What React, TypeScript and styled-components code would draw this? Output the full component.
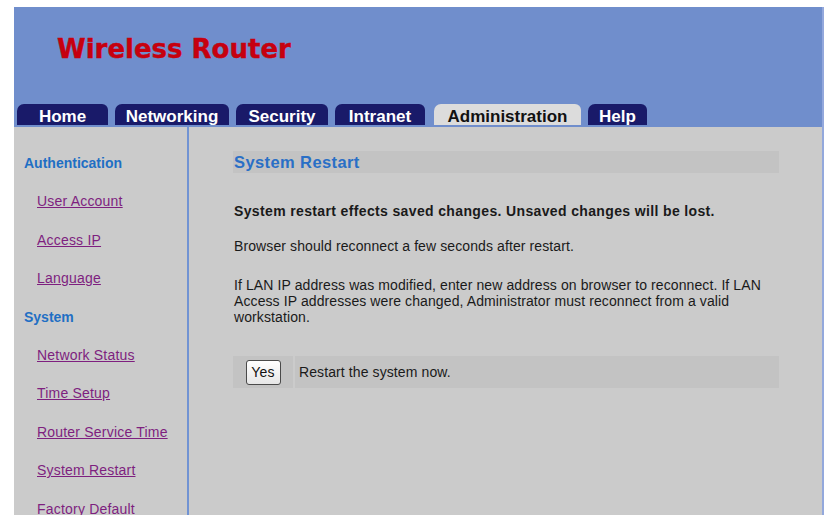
import React from "react";
import styled, { createGlobalStyle } from "styled-components";

const Global = createGlobalStyle`
  html, body { margin: 0; padding: 0; background: #ffffff; }
  body { font-family: "Liberation Sans", Arial, sans-serif; }
`;

const Frame = styled.div`
  margin: 7px 0 0 14px;
  width: 810px;
  height: 508px;
  display: flex;
  flex-direction: column;
  overflow: hidden;
  box-sizing: border-box;
  border-right: 2px solid #93a8dc;
  background: #cbcbcb;
`;

const Header = styled.header`
  flex-shrink: 0;
  height: 120px;
  box-sizing: border-box;
  background: #708ecc;
  display: flex;
  flex-direction: column;
  padding: 27px 0 2px 0;
`;

const Brand = styled.h1`
  margin: 0 0 0 43px;
  font-family: "DejaVu Sans", "Liberation Sans", sans-serif;
  font-weight: bold;
  font-size: 26px;
  line-height: 30px;
  color: #c6000f;
  -webkit-text-stroke: 0.4px #c6000f;
`;

const Tabs = styled.nav`
  margin-top: auto;
  display: flex;
  gap: 7px;
  padding-left: 3px;
  height: 21px;
`;

const Tab = styled.a<{ $w: number; $active?: boolean; $ml?: number }>`
  width: ${(p) => p.$w}px;
  margin-left: ${(p) => p.$ml ?? 0}px;
  height: 21px;
  box-sizing: border-box;
  border-radius: 7px 6px 0 0;
  background: ${(p) => (p.$active ? "#dcdcdc" : "#191a69")};
  color: ${(p) => (p.$active ? "#111" : "#ffffff")};
  font-weight: bold;
  font-size: 17px;
  line-height: 26px;
  text-align: center;
  white-space: nowrap;
  text-decoration: none;
`;

const Body = styled.div`
  flex: 1;
  min-height: 0;
  display: grid;
  grid-template-columns: 175px 1fr;
`;

const Sidebar = styled.aside`
  border-right: 2px solid #7193d3;
  padding: 28px 0 0 10px;
  display: flex;
  flex-direction: column;
  gap: 22.4px;
`;

const SideHeading = styled.div`
  font-weight: bold;
  font-size: 14px;
  line-height: 16px;
  color: #1f6fc4;
`;

const SideLink = styled.a`
  margin-left: 13px;
  font-size: 14px;
  line-height: 16px;
  letter-spacing: 0.2px;
  color: #7e1f7f;
  text-decoration: underline;
  white-space: nowrap;
`;

const Content = styled.main`
  padding: 24px 43px 0 44px;
  display: flex;
  flex-direction: column;
  color: #1a1a1a;
`;

const TitleBar = styled.h2`
  margin: 0;
  height: 22px;
  box-sizing: border-box;
  padding: 1px 0 0 1px;
  background: #c3c3c3;
  color: #2a6fc6;
  font-size: 16.5px;
  letter-spacing: 0.4px;
  line-height: 21px;
  font-weight: bold;
`;

const Para = styled.p<{ $bold?: boolean; $mt: number }>`
  margin: ${(p) => p.$mt}px 0 0 1px;
  font-size: 14px;
  line-height: 16px;
  font-weight: ${(p) => (p.$bold ? "bold" : "normal")};
  letter-spacing: ${(p) => (p.$bold ? "0.36px" : "0.1px")};
`;

const ActionRow = styled.div`
  margin-top: 31px;
  height: 32px;
  display: grid;
  grid-template-columns: 60px 1fr;
  gap: 2px;
`;

const Cell = styled.div<{ $center?: boolean }>`
  background: #c3c3c3;
  display: flex;
  align-items: center;
  justify-content: ${(p) => (p.$center ? "center" : "flex-start")};
  padding-left: ${(p) => (p.$center ? 0 : 4)}px;
  font-size: 14px;
  letter-spacing: 0.1px;
`;

const YesButton = styled.button`
  width: 35px;
  height: 25px;
  padding: 0;
  border: 1px solid #4a4a4a;
  border-radius: 3px;
  background: linear-gradient(#ffffff, #e6e6e6);
  font-family: "Liberation Sans", Arial, sans-serif;
  font-size: 14px;
  letter-spacing: 0.3px;
  color: #111;
`;

const tabs = [
  { label: "Home", w: 91 },
  { label: "Networking", w: 114 },
  { label: "Security", w: 92 },
  { label: "Intranet", w: 90 },
  { label: "Administration", w: 147, active: true, ml: 2 },
  { label: "Help", w: 59 },
];

const side: { text: string; heading?: boolean }[] = [
  { text: "Authentication", heading: true },
  { text: "User Account" },
  { text: "Access IP" },
  { text: "Language" },
  { text: "System", heading: true },
  { text: "Network Status" },
  { text: "Time Setup" },
  { text: "Router Service Time" },
  { text: "System Restart" },
  { text: "Factory Default" },
];

export default function App() {
  return (
    <>
      <Global />
      <Frame>
        <Header>
          <Brand>Wireless Router</Brand>
          <Tabs>
            {tabs.map((t) => (
              <Tab key={t.label} $w={t.w} $active={t.active} $ml={t.ml}>
                {t.label}
              </Tab>
            ))}
          </Tabs>
        </Header>
        <Body>
          <Sidebar>
            {side.map((s) =>
              s.heading ? (
                <SideHeading key={s.text}>{s.text}</SideHeading>
              ) : (
                <SideLink key={s.text}>{s.text}</SideLink>
              )
            )}
          </Sidebar>
          <Content>
            <TitleBar>System Restart</TitleBar>
            <Para $bold $mt={30}>
              System restart effects saved changes. Unsaved changes will be lost.
            </Para>
            <Para $mt={19}>Browser should reconnect a few seconds after restart.</Para>
            <Para $mt={23}>
              If LAN IP address was modified, enter new address on browser to reconnect. If LAN
              Access IP addresses were changed, Administrator must reconnect from a valid
              workstation.
            </Para>
            <ActionRow>
              <Cell $center>
                <YesButton>Yes</YesButton>
              </Cell>
              <Cell>Restart the system now.</Cell>
            </ActionRow>
          </Content>
        </Body>
      </Frame>
    </>
  );
}
